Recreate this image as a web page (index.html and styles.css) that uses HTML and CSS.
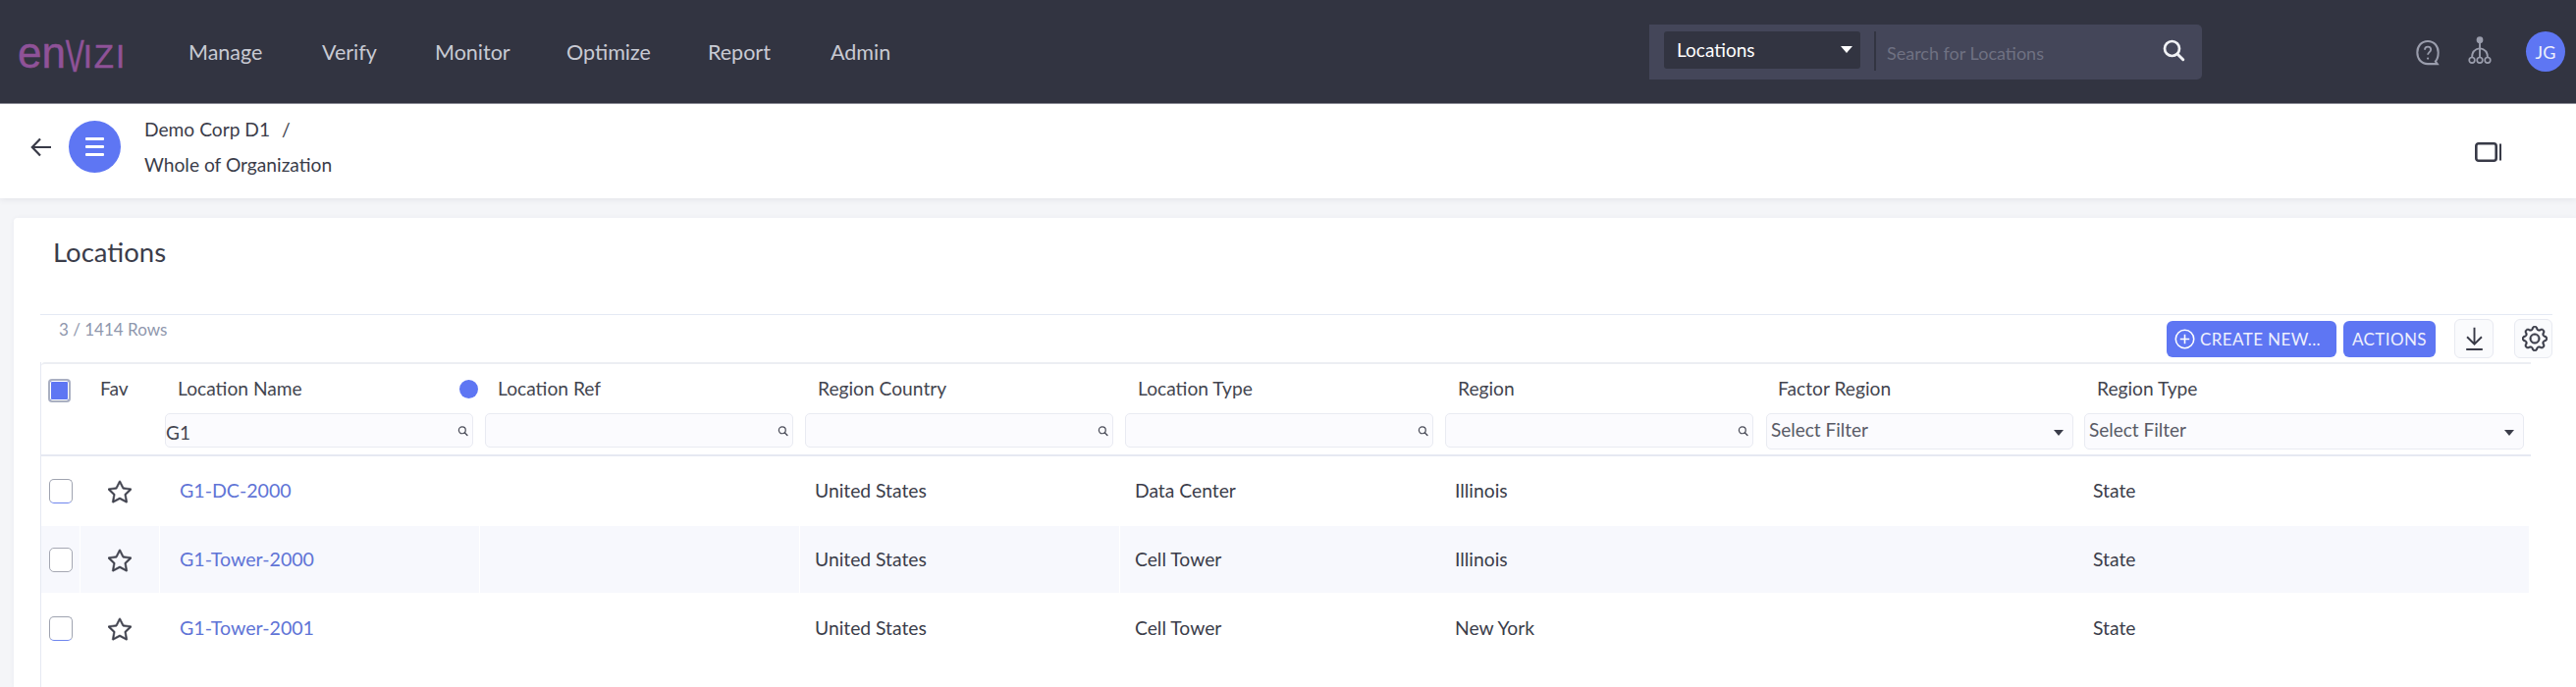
FILE: index.html
```html
<!DOCTYPE html>
<html lang="en">
<head>
<meta charset="utf-8">
<title>Locations</title>
<link rel="stylesheet" href="styles.css">
</head>
<body>
<svg class="defs" width="0" height="0" aria-hidden="true">
  <symbol id="mag" viewBox="0 0 16 16"><circle cx="7" cy="7" r="5" fill="none" stroke="currentColor" stroke-width="1.8"/><path d="M10.8 10.8 14.5 14.5" stroke="currentColor" stroke-width="2" stroke-linecap="round"/></symbol>
  <symbol id="star" viewBox="0 0 16 16"><path fill="currentColor" stroke="currentColor" stroke-width=".35" d="M2.866 14.85c-.078.444.36.791.746.593l4.39-2.256 4.389 2.256c.386.198.824-.149.746-.592l-.83-4.73 3.522-3.356c.33-.314.16-.888-.282-.95l-4.898-.696L8.465.792a.513.513 0 0 0-.927 0L5.354 5.12l-4.898.696c-.441.062-.612.636-.283.95l3.523 3.356-.83 4.73zm4.905-2.767-3.686 1.894.694-3.957a.565.565 0 0 0-.163-.505L1.71 6.745l4.052-.576a.525.525 0 0 0 .393-.288L8 2.223l1.847 3.658a.525.525 0 0 0 .393.288l4.052.575-2.906 2.77a.565.565 0 0 0-.163.506l.694 3.957-3.686-1.894a.503.503 0 0 0-.461 0z"/></symbol>
</svg>

<header class="topbar">
  <div class="logo"><span class="lo-low">en</span><span class="lo-v">V</span><span class="lo-cap">IZI</span></div>
  <nav class="mainnav">
    <a class="nav-manage">Manage</a>
    <a class="nav-verify">Verify</a>
    <a class="nav-monitor">Monitor</a>
    <a class="nav-optimize">Optimize</a>
    <a class="nav-report">Report</a>
    <a class="nav-admin">Admin</a>
  </nav>
  <div class="searchbox">
    <div class="scope"><span>Locations</span><i class="caret caret-white"></i></div>
    <div class="divider"></div>
    <div class="placeholder">Search for Locations</div>
    <svg class="search-ic"><use href="#mag"/></svg>
  </div>
  <div class="tools">
    <svg class="help-ic" viewBox="0 0 28 32" fill="none" stroke="#9a9dac" stroke-width="2.2">
      <path d="M14 3C7 3 2.500 8.500 2.500 15.500S7 28 14 28h10.500l-2-2.800C25 22.500 25.500 19 25.500 15.500 25.500 8.500 21 3 14 3Z"/>
      <path d="M10.800 12.500c0-2 1.500-3.300 3.300-3.300s3.300 1.300 3.300 3.100c0 2.700-3.300 2.900-3.300 5.700" stroke-width="2"/>
      <circle cx="14.100" cy="22" r="1.200" fill="#9a9dac" stroke="none"/>
    </svg>
    <svg class="tree-ic" viewBox="0 0 26 32" fill="none" stroke="#9a9dac" stroke-width="1.800">
      <circle cx="13" cy="5" r="3.600" fill="#9a9dac" stroke="none"/>
      <path d="M13 8v16M13 14C7 15 4.500 19 4.500 24M13 14c6 1 8.500 5 8.500 10" stroke-width="2"/>
      <circle cx="4.500" cy="27" r="3"/><circle cx="13" cy="27" r="3"/><circle cx="21.500" cy="27" r="3"/>
    </svg>
    <div class="avatar">JG</div>
  </div>
</header>

<section class="subbar">
  <svg class="back-ic" viewBox="0 0 24 24" fill="none" stroke="#383a47" stroke-width="2.200"><path d="M22 12H3M11 3.500 2.800 12 11 20.500"/></svg>
  <div class="menu-btn"><span></span><span></span><span></span></div>
  <div class="crumbs">
    <div class="crumb-top">Demo Corp D1<span class="slash">/</span></div>
    <div class="crumb-bottom">Whole of Organization</div>
  </div>
  <svg class="panel-ic" viewBox="0 0 28 20" fill="none" stroke="#383a47"><rect x="1.300" y="1.300" width="20.400" height="17.400" rx="2.500" stroke-width="2.600"/><path d="M26 1.500v17" stroke-width="2"/></svg>
</section>

<main class="main">
  <div class="card">
    <h1 class="title">Locations</h1>
    <div class="toolbar">
      <div class="rowcount">3 / 1414 Rows</div>
      <div class="actions">
        <button class="btn btn-create"><svg viewBox="0 0 20 20" fill="none" stroke="#fff" stroke-width="1.500"><circle cx="10" cy="10" r="8.800"/><path d="M10 5.500v9M5.500 10h9"/></svg>CREATE NEW...</button>
        <button class="btn btn-actions">ACTIONS</button>
        <button class="iconbtn btn-dl"><svg viewBox="0 0 24 28" fill="none" stroke="#383a47" stroke-width="2.200"><path d="M12 1v19M3.500 12 12 20.500 20.500 12M2.500 26.500h19"/></svg></button>
        <button class="iconbtn btn-gear"><svg viewBox="0 0 16 16" fill="#383a47" stroke="#383a47" stroke-width=".3"><path d="M8 4.754a3.246 3.246 0 1 0 0 6.492 3.246 3.246 0 0 0 0-6.492zM5.754 8a2.246 2.246 0 1 1 4.492 0 2.246 2.246 0 0 1-4.492 0z"/><path d="M9.796 1.343c-.527-1.79-3.065-1.79-3.592 0l-.094.319a.873.873 0 0 1-1.255.52l-.292-.16c-1.64-.892-3.433.902-2.54 2.541l.159.292a.873.873 0 0 1-.52 1.255l-.319.094c-1.79.527-1.79 3.065 0 3.592l.319.094a.873.873 0 0 1 .52 1.255l-.16.292c-.892 1.64.901 3.434 2.541 2.54l.292-.159a.873.873 0 0 1 1.255.52l.094.319c.527 1.79 3.065 1.79 3.592 0l.094-.319a.873.873 0 0 1 1.255-.52l.292.16c1.64.893 3.434-.902 2.54-2.541l-.159-.292a.873.873 0 0 1 .52-1.255l.319-.094c1.79-.527 1.79-3.065 0-3.592l-.319-.094a.873.873 0 0 1-.52-1.255l.16-.292c.893-1.64-.902-3.433-2.541-2.54l-.292.159a.873.873 0 0 1-1.255-.52l-.094-.319zm-2.633.283c.246-.835 1.428-.835 1.674 0l.094.319a1.873 1.873 0 0 0 2.693 1.115l.291-.16c.764-.415 1.6.42 1.184 1.185l-.159.292a1.873 1.873 0 0 0 1.116 2.692l.318.094c.835.246.835 1.428 0 1.674l-.319.094a1.873 1.873 0 0 0-1.115 2.693l.16.291c.415.764-.42 1.6-1.185 1.184l-.291-.159a1.873 1.873 0 0 0-2.693 1.116l-.094.318c-.246.835-1.428.835-1.674 0l-.094-.319a1.873 1.873 0 0 0-2.692-1.115l-.292.16c-.764.415-1.6-.42-1.184-1.185l.159-.291A1.873 1.873 0 0 0 1.945 8.930l-.319-.094c-.835-.246-.835-1.428 0-1.674l.319-.094A1.873 1.873 0 0 0 3.060 4.377l-.16-.292c-.415-.764.42-1.600 1.185-1.184l.292.159a1.873 1.873 0 0 0 2.692-1.115l.094-.319z"/></svg></button>
      </div>
    </div>

    <div class="table">
      <div class="thead">
        <div class="grid labels">
          <div class="hcell hcell-check"><span class="check-all"></span></div>
          <div class="hcell hcell-fav">Fav</div>
          <div class="hcell hcell-col">Location Name<i class="sort-dot"></i></div>
          <div class="hcell hcell-col">Location Ref</div>
          <div class="hcell hcell-col">Region Country</div>
          <div class="hcell hcell-col">Location Type</div>
          <div class="hcell hcell-col">Region</div>
          <div class="hcell hcell-col">Factor Region</div>
          <div class="hcell hcell-last">Region Type</div>
        </div>
        <div class="grid filters">
          <div></div><div></div>
          <div class="fcell"><label class="finput"><input value="G1" aria-label="Location Name"><svg><use href="#mag"/></svg></label></div>
          <div class="fcell"><label class="finput"><input aria-label="Location Ref"><svg><use href="#mag"/></svg></label></div>
          <div class="fcell"><label class="finput"><input aria-label="Region Country"><svg><use href="#mag"/></svg></label></div>
          <div class="fcell"><label class="finput"><input aria-label="Location Type"><svg><use href="#mag"/></svg></label></div>
          <div class="fcell"><label class="finput"><input aria-label="Region"><svg><use href="#mag"/></svg></label></div>
          <div class="fcell fcell-sel"><div class="fselect"><span>Select Filter</span><i class="caret caret-dark"></i></div></div>
          <div class="fcell fcell-sel-last"><div class="fselect"><span>Select Filter</span><i class="caret caret-dark"></i></div></div>
        </div>
      </div>

      <div class="grid row">
        <div class="cell cell-check"><span class="cb cb-blue"></span></div>
        <div class="cell cell-fav"><svg class="star"><use href="#star"/></svg></div>
        <div class="cell cell-link"><a>G1-DC-2000</a></div>
        <div class="cell"></div>
        <div class="cell">United States</div>
        <div class="cell">Data Center</div>
        <div class="cell">Illinois</div>
        <div class="cell"></div>
        <div class="cell cell-last">State</div>
      </div>
      <div class="grid row row-alt">
        <div class="cell cell-check"><span class="cb cb-grey"></span></div>
        <div class="cell cell-fav"><svg class="star"><use href="#star"/></svg></div>
        <div class="cell cell-link"><a>G1-Tower-2000</a></div>
        <div class="cell"></div>
        <div class="cell">United States</div>
        <div class="cell">Cell Tower</div>
        <div class="cell">Illinois</div>
        <div class="cell"></div>
        <div class="cell cell-last">State</div>
      </div>
      <div class="grid row">
        <div class="cell cell-check"><span class="cb cb-blue"></span></div>
        <div class="cell cell-fav"><svg class="star"><use href="#star"/></svg></div>
        <div class="cell cell-link"><a>G1-Tower-2001</a></div>
        <div class="cell"></div>
        <div class="cell">United States</div>
        <div class="cell">Cell Tower</div>
        <div class="cell">New York</div>
        <div class="cell"></div>
        <div class="cell cell-last">State</div>
      </div>
    </div>
  </div>
</main>
</body>
</html>
```

FILE: styles.css
```css
* { box-sizing: border-box; }
html, body { margin: 0; height: 700px; overflow: hidden; }
body { font-family: "Lato", "Noto Sans", sans-serif; color: #3b3d4a; background: #f4f5f8; }
.defs { position: absolute; }

/* top bar */
.topbar { height: 106px; background: #323441; border-bottom: 1px solid #8b8c96; display: flex; align-items: center; }
.logo { width: 192px; padding-left: 18px; color: #8f5298; display: flex; align-items: baseline; height: 50px; line-height: 50px; font-family: "Liberation Sans", sans-serif; margin-top: 1px; -webkit-text-stroke: .5px #8f5298; }
.lo-low { font-size: 44px; letter-spacing: 0; }
.lo-v { font-size: 46px; transform: scaleX(.62) translateY(4px); margin: 0 -7px 0 -6px; font-weight: 400; }
.lo-cap { font-size: 33px; letter-spacing: 2px; }
.mainnav { display: flex; font-size: 21.500px; color: #c8cad3; width: 1488px; }
.mainnav a { display: block; }
.nav-manage { width: 136px; }
.nav-verify { width: 115px; }
.nav-monitor { width: 134px; }
.nav-optimize { width: 144px; }
.nav-report { width: 125px; }
.searchbox { width: 563px; height: 56px; background: #444659; border-radius: 0 5px 5px 0; display: flex; align-items: center; padding-left: 15px; position: relative; }
.scope { width: 200px; height: 38px; background: #323441; border-radius: 3px; color: #fff; font-size: 19px; display: flex; align-items: center; justify-content: space-between; padding: 0 8px 0 13px; margin-top: -4px; }
.divider { width: 2px; height: 40px; background: #323441; margin: -2px 11px 0 14px; }
.placeholder { color: #6f7182; font-size: 18px; flex: 1; margin-top: 3px; }
.search-ic { width: 24px; height: 24px; color: #f1f2f5; margin-right: 17px; margin-top: -4px; }
.caret { display: block; width: 0; height: 0; border-style: solid; border-color: transparent; }
.caret-white { border-width: 7px 6px 0; border-top-color: #fff; }
.caret-dark { border-width: 6px 5px 0; border-top-color: #3b3d4a; }
.tools { flex: 1; display: flex; align-items: center; padding-left: 217px; }
.help-ic { width: 26px; height: 30px; margin-top: 2px; }
.tree-ic { width: 26px; height: 30px; margin-left: 27px; margin-top: -4px; }
.avatar { width: 40px; height: 41px; border-radius: 50%; background: #5e76f3; color: #eef0fb; font-size: 18px; margin-left: 34px; display: flex; align-items: center; justify-content: center; }

/* breadcrumb bar */
.subbar { height: 96px; background: #fff; box-shadow: 0 2px 6px rgba(60, 64, 90, .08); display: flex; align-items: center; position: relative; }
.back-ic { width: 24px; height: 24px; margin-left: 30px; margin-top: -8px; }
.menu-btn { width: 53px; height: 53px; border-radius: 50%; background: #5e76f3; margin-left: 16px; margin-top: -10px; display: flex; flex-direction: column; align-items: center; justify-content: center; gap: 5px; }
.menu-btn span { width: 19px; height: 3px; background: #fff; border-radius: 1px; }
.crumbs { margin: -9px 0 0 24px; font-size: 19.200px; color: #3b3d4a; flex: 1; }
.crumb-top { height: 36px; line-height: 26px; }
.crumb-bottom { line-height: 26px; }
.slash { margin-left: 12px; }
.panel-ic { width: 28px; height: 20px; margin-right: 75px; margin-top: 1px; }

/* main */
.main { padding: 20px 0 0 14px; }
.card { background: #fff; height: 478px; padding: 0 24px 0 27px; border-radius: 4px 0 0 0; box-shadow: 0 0 5px rgba(60, 64, 90, .05); }
.title { margin: 0; height: 98px; padding: 19px 0 0 13px; font-size: 27.500px; line-height: 32px; font-weight: 400; color: #3b3d4a; }
.toolbar { height: 49px; border-top: 1px solid #e4e9f4; display: flex; justify-content: space-between; }
.rowcount { font-size: 17px; color: #8f97ad; padding: 4px 0 0 19px; }
.actions { display: flex; align-items: flex-start; }
.btn { height: 37px; margin-top: 6px; border: 0; border-radius: 6px; background: #5e76f3; color: #eef0fd; font-family: inherit; font-size: 17px; letter-spacing: .4px; padding: 0; display: flex; align-items: center; justify-content: center; }
.btn-create { width: 173px; margin-right: 7px; gap: 5px; padding-right: 8px; }
.btn-create svg { width: 21px; height: 21px; }
.btn-actions { width: 94px; margin-right: 19px; }
.iconbtn { width: 40px; height: 40px; margin-top: 4px; border: 1px solid #e8eaf1; border-radius: 6px; background: #fafbfd; padding: 0; display: flex; align-items: center; justify-content: center; }
.btn-dl svg { width: 21px; height: 26px; }
.btn-gear { margin-left: 21px; width: 39px; padding-left: 3px; }
.btn-gear svg { width: 26px; height: 26px; }

/* table */
.table { width: 2537px; height: 331px; border-left: 1px solid #e6e9f2; }
.thead { border-top: 2px solid #eceef3; border-bottom: 2px solid #e6e9f2; height: 96px; border-radius: 4px 0 0 0; }
.grid { display: grid; grid-template-columns: 40px 81px 326px 326px 326px 326px 326px 326px 1fr; }
.labels { height: 50px; font-size: 19.200px; color: #43454f; }
.hcell { display: flex; align-items: center; padding-bottom: 1px; }
.hcell-check { padding: 4px 0 0 7px; }
.check-all { width: 23px; height: 24px; border: 2px solid #aab0c2; border-radius: 4px; background: #5e76f3; box-shadow: inset 0 0 0 1px #fff; }
.hcell-fav { padding-left: 20px; }
.hcell-col { padding-left: 18px; position: relative; }
.hcell-last { padding-left: 17px; }
.sort-dot { position: absolute; left: 305px; top: 16px; width: 19px; height: 19px; border-radius: 50%; background: #5e76f3; }
.filters { height: 44px; }
.fcell { padding: 0 7px 0 5px; }
.fcell-sel { padding: 0 7px 0 6px; }
.fcell-sel-last { padding: 0 7px 0 4px; }
.finput, .fselect { display: flex; align-items: center; height: 35px; border: 1px solid #e9ebf2; border-radius: 5px; background: #fbfbfe; }
.fselect { height: 37px; justify-content: space-between; padding: 0 9px 4px 4px; font-size: 19px; color: #585a66; }
.fselect .caret { margin-top: 6px; }
.finput input { flex: 1; min-width: 0; border: 0; outline: 0; background: transparent; font: inherit; font-size: 19px; color: #43454f; padding: 3px 0 0; }
.finput svg { width: 11px; height: 12px; margin-right: 4px; color: #4a4c58; }

.row { height: 70px; margin-right: 2px; }
.row-alt { background: #f7f8fd; border-top: 1px solid #fff; border-bottom: 1px solid #fff; }
.row-alt .cell { border-right: 1px solid #fff; }
.row-alt .cell:nth-child(n+6) { border-right: 0; }
.cell { display: flex; align-items: center; padding-left: 15px; font-size: 19.300px; color: #3b3d4a; padding-bottom: 2px; }
.cell-check { padding: 0 0 0 8px; }
.cell-fav { padding: 2px 0 0 28px; }
.cell-link { padding-left: 20px; font-size: 19.600px; }
.cell-link a { color: #6074d6; }
.cell-last { padding-left: 13px; }
.cb { width: 24px; height: 25px; border-radius: 5px; background: #fff; }
.cb-blue { border: 1px solid #9fa3b0; border-bottom-color: #6f86ee; }
.cb-grey { border: 1.500px solid #a5a8b3; }
.star { width: 24px; height: 24px; color: #3f414d; }
```
